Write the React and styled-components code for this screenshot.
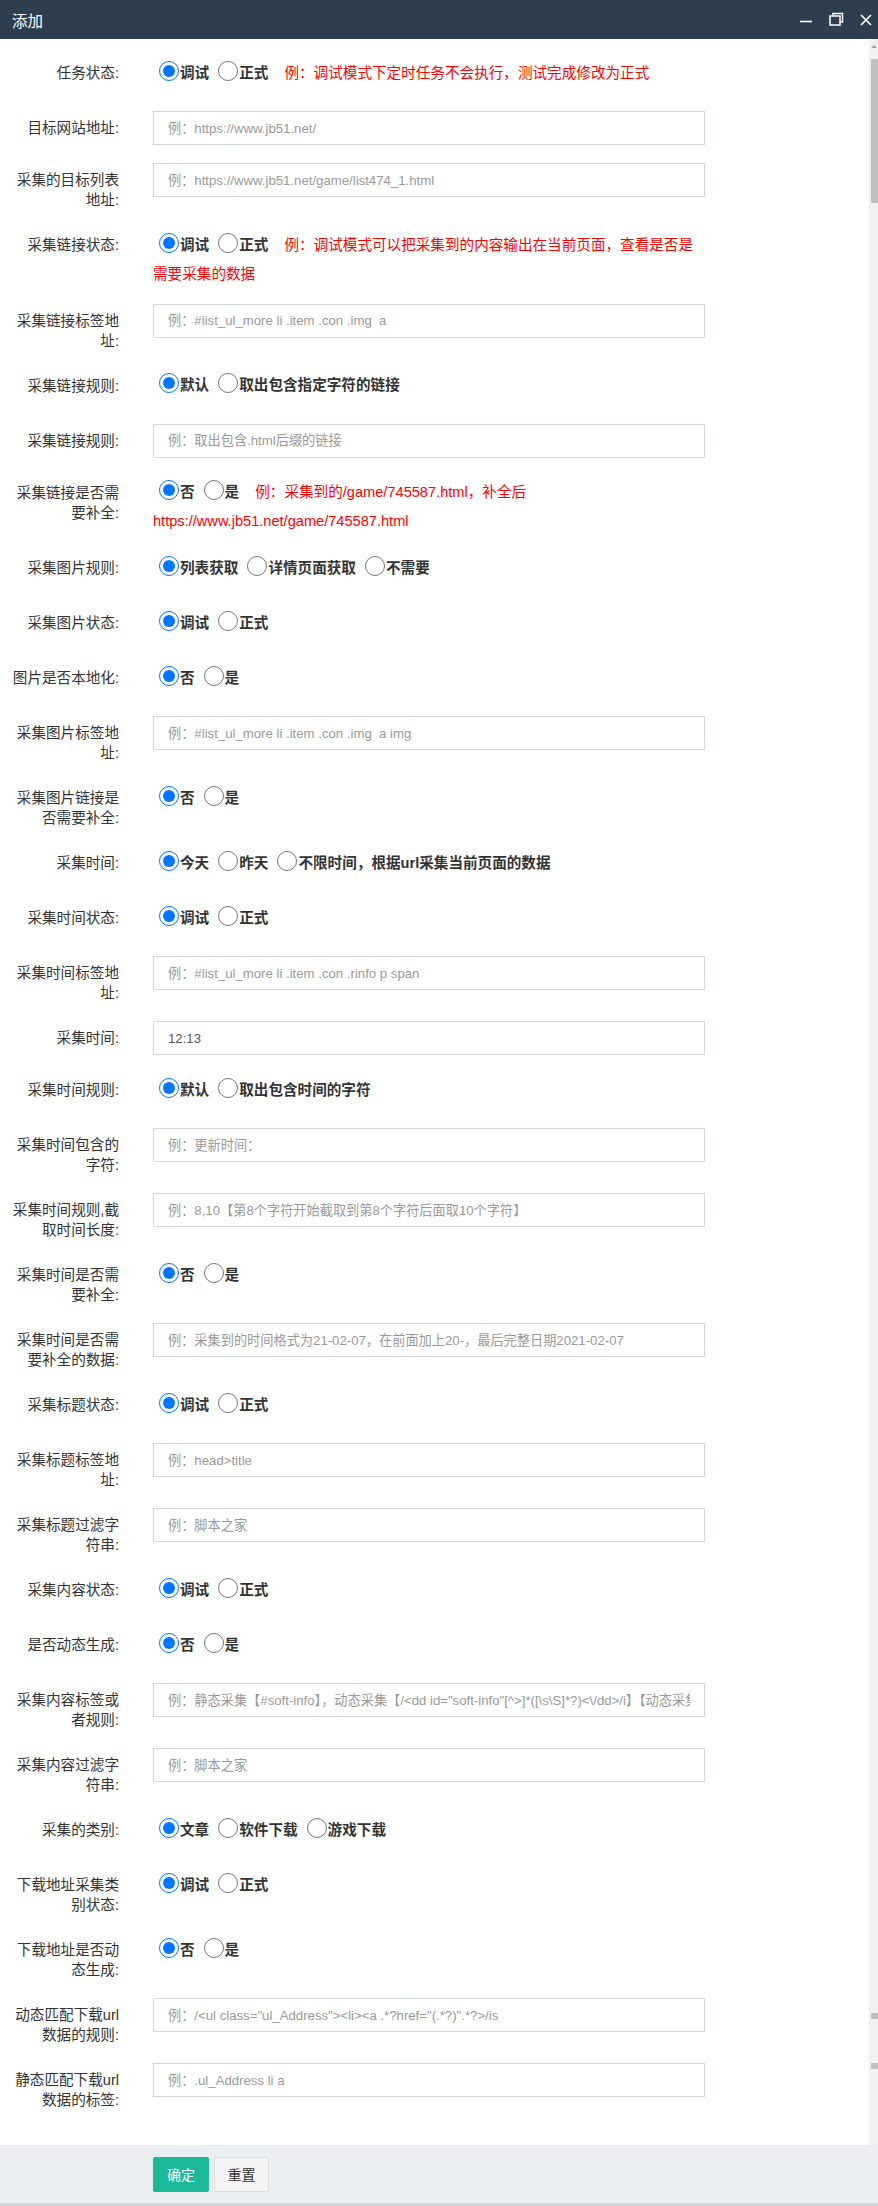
import React from 'react'
import styled, { createGlobalStyle } from 'styled-components'

const GlobalStyle = createGlobalStyle`
  html, body { margin: 0; padding: 0; background: #fff; }
  body { font-family: "Liberation Sans", "Noto Sans CJK SC", sans-serif; }
`

const Page = styled.div`
  width: 878px;
  height: 2206px;
  display: flex;
  flex-direction: column;
  overflow: hidden;
  background: #fff;
`

const TitleBar = styled.div`
  height: 39px;
  flex: 0 0 39px;
  background: #2f3e4f;
  display: flex;
  align-items: center;
  padding: 0 3px 0 12px;
  color: #fff;
  font-size: 15.5px;
`

const Title = styled.div`
  flex: 1;
`

const WinBtn = styled.span`
  width: 18px;
  height: 18px;
  margin-left: 12px;
  display: flex;
`

const Body = styled.div`
  flex: 1;
  display: flex;
  min-height: 0;
  overflow: hidden;
`

const Content = styled.div`
  flex: 1;
  padding-top: 17px;
`

const Track = styled.div`
  width: 9px;
  background: #f1f1f1;
  display: flex;
  flex-direction: column;
  align-items: flex-end;
`

const UpArrow = styled.div`
  margin: 6px 1px 0 0;
  width: 0;
  height: 0;
  border-left: 3px solid transparent;
  border-right: 3px solid transparent;
  border-bottom: 3px solid #a3a3a3;
`

const Thumb = styled.div`
  width: 7px;
  flex: 0 0 auto;
  height: ${p => p.$h}px;
  margin-top: ${p => p.$top}px;
  background: #c1c1c1;
`

const Row = styled.div`
  display: flex;
  align-items: flex-start;
  margin-bottom: 15px;
`

const Label = styled.label`
  flex: 0 0 108px;
  margin: 0 34px 0 11px;
  padding: 7px 0 3px;
  line-height: 20px;
  text-align: right;
  font-size: 14.6px;
  color: #333;
`

const Field = styled.div`
  width: 552px;
  box-sizing: border-box;
  min-height: ${p => (p.$radio ? '40px' : '37px')};
  padding-top: ${p => (p.$radio ? '2.5px' : '0')};
  line-height: ${p => (p.$radio ? '29px' : 'normal')};
  font-size: 14.6px;
`

const TextInput = styled.input`
  display: block;
  width: 100%;
  height: 34px;
  box-sizing: border-box;
  border: 1px solid #d2d6de;
  padding: 0 14px;
  font: 13.2px "Liberation Sans", "Noto Sans CJK SC", sans-serif;
  color: #555;
  outline: none;
  background: #fff;
  &::placeholder { color: #999; }
`

const Opt = styled.span`
  white-space: nowrap;
`

const Radio = styled.input`
  width: 20px;
  height: 20px;
  margin: 0 1px 0 ${p => (p.$first ? '6px' : '5px')};
  vertical-align: -3px;
`

const OptText = styled.span`
  font-weight: bold;
  color: #333;
  margin-right: 4px;
`

const Hint = styled.span`
  color: #f00;
  margin-left: 12px;
`

const Footer = styled.div`
  flex: 0 0 61px;
  height: 61px;
  box-sizing: border-box;
  background: #ebeef0;
  border-bottom: 3px solid #d3d7da;
  display: flex;
  align-items: flex-start;
  gap: 5px;
  padding: 11.5px 0 0 153px;
`

const Button = styled.button`
  height: 35px;
  width: ${p => p.$w}px;
  padding: 0;
  border-radius: 2px;
  font: 14px "Liberation Sans", "Noto Sans CJK SC", sans-serif;
  background: ${p => (p.$primary ? '#1ab99a' : '#f4f4f4')};
  color: ${p => (p.$primary ? '#fff' : '#333')};
  border: 1px solid ${p => (p.$primary ? '#1ab99a' : '#dcdcdc')};
`

const rows = [
  { label: '任务状态:', radios: ['调试', '正式'], hint: '例：调试模式下定时任务不会执行，测试完成修改为正式' },
  { label: '目标网站地址:', ph: '例：https://www.jb51.net/' },
  { label: '采集的目标列表地址:', ph: '例：https://www.jb51.net/game/list474_1.html' },
  { label: '采集链接状态:', radios: ['调试', '正式'], hint: '例：调试模式可以把采集到的内容输出在当前页面，查看是否是需要采集的数据' },
  { label: '采集链接标签地址:', ph: '例：#list_ul_more li .item .con .img  a' },
  { label: '采集链接规则:', radios: ['默认', '取出包含指定字符的链接'] },
  { label: '采集链接规则:', ph: '例：取出包含.html后缀的链接' },
  { label: '采集链接是否需要补全:', radios: ['否', '是'], hint: '例：采集到的/game/745587.html，补全后https://www.jb51.net/game/745587.html' },
  { label: '采集图片规则:', radios: ['列表获取', '详情页面获取', '不需要'] },
  { label: '采集图片状态:', radios: ['调试', '正式'] },
  { label: '图片是否本地化:', radios: ['否', '是'] },
  { label: '采集图片标签地址:', ph: '例：#list_ul_more li .item .con .img  a img' },
  { label: '采集图片链接是否需要补全:', radios: ['否', '是'] },
  { label: '采集时间:', radios: ['今天', '昨天', '不限时间，根据url采集当前页面的数据'] },
  { label: '采集时间状态:', radios: ['调试', '正式'] },
  { label: '采集时间标签地址:', ph: '例：#list_ul_more li .item .con .rinfo p span' },
  { label: '采集时间:', value: '12:13' },
  { label: '采集时间规则:', radios: ['默认', '取出包含时间的字符'] },
  { label: '采集时间包含的字符:', ph: '例：更新时间：' },
  { label: '采集时间规则,截取时间长度:', ph: '例：8,10【第8个字符开始截取到第8个字符后面取10个字符】' },
  { label: '采集时间是否需要补全:', radios: ['否', '是'] },
  { label: '采集时间是否需要补全的数据:', ph: '例：采集到的时间格式为21-02-07，在前面加上20-，最后完整日期2021-02-07' },
  { label: '采集标题状态:', radios: ['调试', '正式'] },
  { label: '采集标题标签地址:', ph: '例：head>title' },
  { label: '采集标题过滤字符串:', ph: '例：脚本之家' },
  { label: '采集内容状态:', radios: ['调试', '正式'] },
  { label: '是否动态生成:', radios: ['否', '是'] },
  { label: '采集内容标签或者规则:', ph: '例：静态采集【#soft-info】，动态采集【/<dd id="soft-info"[^>]*([\\s\\S]*?)<\\/dd>/i】【动态采集需要写正则】' },
  { label: '采集内容过滤字符串:', ph: '例：脚本之家' },
  { label: '采集的类别:', radios: ['文章', '软件下载', '游戏下载'] },
  { label: '下载地址采集类别状态:', radios: ['调试', '正式'] },
  { label: '下载地址是否动态生成:', radios: ['否', '是'] },
  { label: '动态匹配下载url数据的规则:', ph: '例：/<ul class="ul_Address"><li><a .*?href="(.*?)".*?>/is' },
  { label: '静态匹配下载url数据的标签:', ph: '例：.ul_Address li a' },
]

function FormRow({ row, idx }) {
  if (row.radios) {
    return (
      <Row>
        <Label>{row.label}</Label>
        <Field $radio>
          {row.radios.map((r, i) => (
            <Opt key={r}>
              <Radio type="radio" name={`g${idx}`} defaultChecked={i === 0} $first={i === 0} />
              <OptText>{r}</OptText>
            </Opt>
          ))}
          {row.hint && <Hint>{row.hint}</Hint>}
        </Field>
      </Row>
    )
  }
  return (
    <Row>
      <Label>{row.label}</Label>
      <Field>
        <TextInput placeholder={row.ph} defaultValue={row.value} />
      </Field>
    </Row>
  )
}

export default function App() {
  return (
    <Page>
      <GlobalStyle />
      <TitleBar>
        <Title>添加</Title>
        <WinBtn>
          <svg width="18" height="18" viewBox="0 0 18 18">
            <path d="M3 10.5h12" stroke="#fff" strokeWidth="1.6" />
          </svg>
        </WinBtn>
        <WinBtn>
          <svg width="18" height="18" viewBox="0 0 18 18" fill="none" stroke="#fff" strokeWidth="1.5">
            <path d="M6 4.5V2.5h9.5v8.5h-2" />
            <rect x="3" y="5" width="10" height="9" fill="#2f3e4f" />
          </svg>
        </WinBtn>
        <WinBtn>
          <svg width="18" height="18" viewBox="0 0 18 18" stroke="#fff" strokeWidth="1.6">
            <path d="M4 4l10 10M14 4L4 14" />
          </svg>
        </WinBtn>
      </TitleBar>
      <Body>
        <Content>
          {rows.map((row, i) => (
            <FormRow key={i} row={row} idx={i} />
          ))}
        </Content>
        <Track>
          <UpArrow />
          <Thumb $top={11} $h={144} />
          <Thumb $top={1810} $h={6} />
          <Thumb $top={44} $h={6} />
        </Track>
      </Body>
      <Footer>
        <Button $primary $w={56}>确定</Button>
        <Button $w={55}>重置</Button>
      </Footer>
    </Page>
  )
}
